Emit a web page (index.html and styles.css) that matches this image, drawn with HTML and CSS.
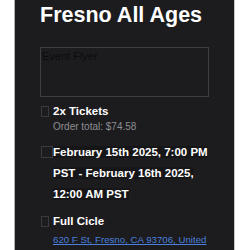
FILE: index.html
```html
<!DOCTYPE html>
<html>
<head>
<meta charset="utf-8">
<link rel="stylesheet" href="styles.css">
</head>
<body>
<div class="panel">
  <h1 class="title">Fresno All Ages</h1>
  <div class="flyer">Event Flyer</div>
  <div class="item">
    <div class="icon-col"><span class="icon"></span></div>
    <div class="body">
      <div class="strong">2x Tickets</div>
      <div class="muted">Order total: $74.58</div>
    </div>
  </div>
  <div class="item item-date">
    <div class="icon-col"><span class="icon icon-wide"></span></div>
    <div class="body">
      <div class="strong date"><span class="hl">February 15th 2025, 7:00 PM PST - February 16th 2025, 12:00 AM PST</span></div>
    </div>
  </div>
  <div class="item item-venue">
    <div class="icon-col"><span class="icon"></span></div>
    <div class="body">
      <div class="strong">Full Cicle</div>
      <a class="link" href="#">620 F St, Fresno, CA 93706, United States</a>
    </div>
  </div>
</div>
</body>
</html>
```
FILE: styles.css
```css
html, body {
  margin: 0;
  padding: 0;
  background: #ffffff;
  height: 250px;
  overflow: hidden;
}
.panel {
  margin-left: 14px;
  width: 221px;
  height: 250px;
  background: #1c1c1e;
  border-left: 1px solid #b0b0b0;
  border-right: 1px solid #c8c8c8;
  padding: 0 16px 0 25px;
  box-sizing: border-box;
  font-family: "Liberation Sans", Arial, sans-serif;
  color: #ffffff;
  overflow: hidden;
}
.title {
  margin: 0;
  padding-top: 3px;
  font-size: 21.5px;
  line-height: 24px;
  font-weight: bold;
}
.flyer {
  margin-top: 20px;
  width: 169px;
  height: 50px;
  box-sizing: border-box;
  border: 1px solid #3e3e40;
  color: #0c0c0c;
  font-size: 11px;
  line-height: 13px;
  padding: 2px 1px;
}
.item {
  display: flex;
  margin-top: 7px;
}
.item-date {
  margin-top: 8px;
}
.item-venue {
  margin-top: 9px;
}
.icon-col {
  flex: none;
  width: 13px;
  padding-left: 1px;
  box-sizing: border-box;
}
.icon {
  display: block;
  width: 8px;
  height: 11px;
  box-sizing: border-box;
  border: 1px solid #3a3a3c;
  margin-top: 2px;
}
.icon-wide {
  width: 12px;
  height: 12px;
  margin-top: 4px;
}
.body {
  flex: 1;
  min-width: 0;
}
.strong {
  font-size: 11.5px;
  font-weight: bold;
  line-height: 15px;
}
.date {
  line-height: 21px;
}
.hl {
  background: #161618;
}
.muted {
  font-size: 10px;
  color: #8e8e93;
  line-height: 15px;
}
.link {
  display: block;
  margin-top: 3px;
  font-size: 9.7px;
  line-height: 16px;
  color: #4a7fdc;
  text-decoration: underline;
}
```
